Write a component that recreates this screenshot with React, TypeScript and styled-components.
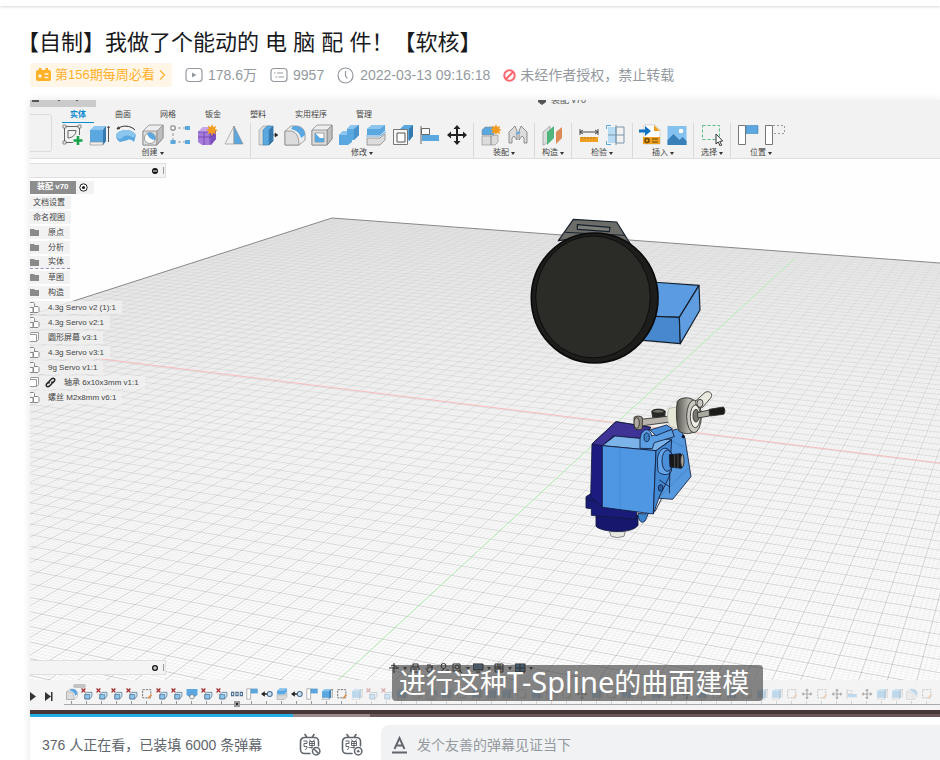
import React from "react";
import styled, { createGlobalStyle, css } from "styled-components";

const CJK = `"Liberation Sans", "Noto Sans CJK SC", sans-serif`;

const Global = createGlobalStyle`
  *, *::before, *::after { box-sizing: border-box; }
  html { scrollbar-width: none; }
  body {
    margin: 0;
    background: #fff;
    font-family: ${CJK};
    color: #18191c;
    overflow-x: hidden;
  }
  button { border: 0; margin: 0; padding: 0; background: none; font: inherit; color: inherit; cursor: pointer; }
  svg { display: block; }
`;

/* ---------- page header ---------- */

const NavEdge = styled.header`
  height: 6px;
  background: #fff;
  box-shadow: 0 1px 3px rgba(0, 0, 0, 0.16);
`;

const Page = styled.main`
  padding: 22px 0 0 30px;
`;

const Title = styled.h1`
  margin: 0 0 0 -13px;
  font-size: 22px;
  line-height: 30px;
  font-weight: 400;
  white-space: nowrap;
  text-spacing-trim: space-all;
`;

const Meta = styled.div`
  display: flex;
  align-items: center;
  margin-top: 5px;
  height: 24px;
  font-size: 14px;
  line-height: 24px;
  color: #9499a0;
  white-space: nowrap;
`;

const WeeklyBadge = styled.a`
  display: flex;
  align-items: center;
  gap: 4px;
  height: 24px;
  width: 142px;
  padding: 0 5px 0 6px;
  border-radius: 2px;
  background: #fff6e8;
  color: #ffb027;
  font-size: 13px;
  text-decoration: none;
`;

const MetaItem = styled.span<{ $gap?: number }>`
  display: flex;
  align-items: center;
  gap: ${(p) => p.$gap ?? 5}px;
  margin-left: 13px;
  text-spacing-trim: space-all;
`;

/* ---------- player ---------- */

const Player = styled.section`
  margin-top: 13px;
  box-shadow: 0 0 8px #e5e6e9;
`;

const Video = styled.div`
  position: relative;
  display: flex;
  flex-direction: column;
  aspect-ratio: 91 / 61;
  overflow: hidden;
  background: #fdfefd;
  font-size: 8px;
  line-height: 12px;
  color: #444;
`;

const Scene = styled.svg`
  position: absolute;
  inset: 0;
  width: 100%;
  height: 100%;
`;

const Ribbon = styled.div`
  position: relative;
  height: 59px;
  flex: none;
  background: #f2f2f2;
  border-bottom: 1px solid #dedede;
  overflow: hidden;
`;

const TitleStrip = styled.div`
  display: flex;
  align-items: flex-end;
  height: 7px;
`;

const StripMenu = styled.div`
  display: flex;
  align-items: flex-start;
  gap: 20px;
  width: 66px;
  height: 7px;
  padding-left: 2px;
  background: #cbcbcb;
`;

const DocName = styled.div`
  display: flex;
  align-items: flex-end;
  gap: 5px;
  margin-left: 442px;
  height: 14px;
  line-height: 14px;
  font-size: 9px;
  color: #555;
`;

const RibbonBody = styled.div`
  display: flex;
`;

const Workspace = styled.div`
  flex: none;
  width: 22px;
  height: 38px;
  margin: 7px 6px 0 0;
  border: 1px solid #dcdcdc;
  border-left: 0;
  border-radius: 0 3px 3px 0;
`;

const Tabs = styled.nav`
  display: flex;
  gap: 13px;
  padding-left: 4px;
  height: 16px;
`;

const Tab = styled.button<{ $active?: boolean }>`
  height: 16px;
  padding: 0 8px;
  font-size: 8px;
  line-height: 14px;
  white-space: nowrap;
  border-bottom: 1px solid transparent;
  ${(p) =>
    p.$active &&
    css`
      color: #0a8bd0;
      font-weight: 700;
      border-bottom-color: #0a8bd0;
    `}
`;

const Groups = styled.div`
  display: flex;
`;

const Group = styled.div`
  display: flex;
  flex-direction: column;
  align-items: center;
  min-width: 37px;
  padding-right: 3px;
  & + & { padding-left: 3px; border-left: 1px solid #dadada; }
`;

const Tools = styled.div`
  display: flex;
`;

const Tool = styled.button`
  display: flex;
  justify-content: center;
  width: 27px;
  height: 24px;
  padding-top: 1px;
`;

const GroupLabel = styled.button`
  display: flex;
  align-items: center;
  gap: 2px;
  height: 12px;
  font-size: 8px;
  line-height: 12px;
`;

const Caret = styled.i`
  border: 2px solid transparent;
  border-top: 3px solid #333;
  border-bottom: 0;
`;

const PanelBar = styled.div<{ $bottom?: boolean }>`
  position: relative;
  flex: none;
  display: flex;
  align-items: center;
  justify-content: flex-end;
  gap: 4px;
  width: 136px;
  height: 15px;
  margin-top: ${(p) => (p.$bottom ? "auto" : "4px")};
  padding-right: 1px;
  background: #f4f4f4;
  border: 1px solid #dfdfdf;
  border-left: 0;
`;

const Grip = styled.i`
  width: 2px;
  height: 7px;
  border-right: 1px solid #999;
`;

const Tree = styled.ul`
  position: relative;
  margin: 3px 0 0;
  padding: 0;
  list-style: none;
`;

const TreeRow = styled.li<{ $dotted?: boolean }>`
  display: flex;
  align-items: center;
  width: max-content;
  height: 13px;
  margin-bottom: 2px;
  padding-right: 6px;
  background: rgba(240, 240, 240, 0.85);
  white-space: pre;
  ${(p) => p.$dotted && css`border-bottom: 1px dashed #8f93bd;`}
`;

const TreeIcon = styled.span`
  width: 10px;
  margin-right: 8px;
`;

const LinkIcon = styled.span`
  width: 10px;
  margin: 0 9px 0 -3px;
`;

const PlainLabel = styled.span`
  padding-left: 3px;
`;

const RootLabel = styled.strong`
  align-self: stretch;
  padding: 0 7px;
  margin-right: 3px;
  background: #8d8d8d;
  color: #fff;
`;

const ViewTools = styled.div`
  position: absolute;
  left: 359px;
  bottom: 36px;
  display: flex;
  align-items: center;
  gap: 3px;
`;

const Timeline = styled.div`
  position: relative;
  display: flex;
  flex: none;
  height: 30px;
  margin-top: 5px;
  background: rgba(243, 243, 243, 0.94);
`;

const Transport = styled.div`
  flex: none;
  display: flex;
  gap: 7px;
  width: 34px;
  padding-top: 12px;
`;

const Track = styled.div`
  flex: 1;
  display: flex;
  height: 25px;
  min-width: 0;
  overflow: hidden;
  border-bottom: 1px solid #a9a9a9;
`;

const Feature = styled.button<{ $faded?: boolean }>`
  flex: none;
  display: flex;
  flex-direction: column;
  align-items: center;
  justify-content: space-between;
  width: 15px;
  padding-top: 8px;
  opacity: ${(p) => (p.$faded ? 0.35 : 1)};
  &::after { content: ""; width: 1px; height: 3px; background: #999; }
`;

const FolderPill = styled.i`
  position: absolute;
  left: 43px;
  top: 4px;
  width: 13px;
  height: 4px;
  border-radius: 2px;
  background: #c3c3c3;
`;

const Marker = styled.i`
  position: absolute;
  left: 204px;
  top: 21px;
  width: 6px;
  height: 6px;
  border: 2px solid #999;
  background: #222;
`;

const Subtitle = styled.p`
  position: absolute;
  left: 50%;
  bottom: 9px;
  margin: 0 0 0 -93px;
  padding: 0 14px 0 7px;
  border-radius: 4px;
  background: rgba(62, 62, 62, 0.62);
  color: #fff;
  font: 400 27px/36px "Noto Sans", "Noto Sans CJK SC", sans-serif;
  white-space: nowrap;
`;

const SubtitleLatin = styled.span`
  font-size: 29px;
  line-height: 1;
`;

const ProgressBand = styled.div`
  padding-top: 4px;
  background: #483739;
`;

const Progress = styled.input`
  appearance: none;
  display: block;
  width: 100%;
  height: 3px;
  margin: 0;
  background: linear-gradient(90deg, #23ade5 0 28.9%, #9b8889 28.9% 37.4%, #6b5557 37.4%);
  &::-webkit-slider-thumb { appearance: none; width: 0; height: 0; }
`;

const SendBar = styled.form`
  display: flex;
  align-items: center;
  padding: 8px 0 8px 12px;
  background: #fff;
  font-size: 14px;
  line-height: 20px;
  color: #61666d;
  white-space: nowrap;
`;

const Watching = styled.span`
  width: 256px;
  text-spacing-trim: space-all;
`;

const DanmakuButton = styled.button`
  width: 24px;
  height: 24px;
  margin-right: 18px;
`;

const DanmakuField = styled.label`
  flex: 1;
  display: flex;
  align-items: center;
  gap: 9px;
  height: 40px;
  margin-left: -1px;
  padding-left: 10px;
  border-radius: 8px 0 0 8px;
  background: #f1f2f3;
`;

const DanmakuInput = styled.input`
  flex: 1;
  min-width: 0;
  border: 0;
  padding: 0;
  outline: 0;
  background: transparent;
  font: 14px/20px ${CJK};
  color: #18191c;
  &::placeholder { color: #9499a0; opacity: 1; }
`;

/* ---------- ribbon icons ---------- */

const B = "#5ba7e0";
const BL = "#8cc5ee";
const BD = "#3679ad";
const G = "#8b8b8b";
const L = "#dcdcdc";

const glyphs: Record<string, React.ReactNode> = {
  sketch: (
    <g fill="none" stroke="#666" strokeWidth="1">
      <path d="M3.500 2v17M2 2.500h18M18.500 2v9M2 18.500h10" />
      <path d="M2 1h3v3H2zM17 1h3v3h-3zM2 17h3v3H2z" fill="#eee" strokeWidth=".7" />
      <path d="M7 14V6.500h8c0 4-3 7-8 7.500z" />
      <path d="M17 12v9M12.500 16.500h9" stroke="#16a34a" strokeWidth="2.600" />
    </g>
  ),
  extrude: (
    <g>
      <path d="M2 6l4-4h12v15l-3 4H2z" fill={BL} />
      <path d="M2 6h13v12H2z" fill={B} />
      <path d="M15 6l3-4v15l-3 4z" fill={BD} />
      <path d="M2 18h13v3H2z" fill="#eee" stroke={G} strokeWidth=".6" />
      <path d="M20.500 2v16M19.500 4l1-2 1 2" stroke="#555" fill="none" />
    </g>
  ),
  revolve: (
    <g>
      <path d="M1 11c3-6 16-7 20 0l-2 7c-2-2-4-3-6-2l-8 2c-3-2-4-4-4-7z" fill={B} />
      <path d="M1 11c3-6 16-7 20 0-2 3-4 3-6 1-3-1-6-1-9 3-3 0-5-2-5-4z" fill={BL} />
      <path d="M2 5c5-4 13-4 18 1M2 5l3-.500M2 5l1.500-2.500" fill="none" stroke="#333" />
    </g>
  ),
  hole: (
    <g stroke={G} strokeWidth=".8">
      <path d="M1 7l6-6h14v13l-6 7H1z" fill="#eee" />
      <path d="M1 7h14v14H1z" fill={L} />
      <path d="M15 7l6-6v13l-6 7z" fill="#bdbdbd" />
      <circle cx="8" cy="14" r="5.500" fill="#fff" />
      <path d="M5 9.500a5.500 5.500 0 0 1 8 6.500c-4 0-7-3-8-6.500z" fill={B} stroke="none" />
    </g>
  ),
  pattern: (
    <g>
      <path d="M4 4h14M4 4v14M4 18h14" stroke="#999" strokeDasharray="3 2" />
      <path d="M2 2h4v4H2z" fill="#fff" stroke="#777" />
      <path d="M16 2h5v4h-5zM1.500 16h5v4h-5zM16 16h5v4h-5z" fill={B} />
    </g>
  ),
  form: (
    <g>
      <path d="M2 8l5-5h10l3 4v8l-5 6H6l-4-3z" fill="#a57bdb" />
      <path d="M2 8l5-5h10l-3 5z" fill="#c7a6ed" />
      <path d="M14 8l6-2v9l-5 6z" fill="#7c4fc0" />
      <path d="M2 13h13l5-3M8 8v13M2 8h12v12" stroke="#6d43ad" fill="none" strokeWidth=".8" />
      <path d="M16 0l1.200 3 3-1-1.200 3 3 1.200-3 1.200 1 3-3-1.500L16 12l-1.500-3-3 1 1.300-3-3-1 3-1.200-1-3 3 1.200z" fill="#f39c1f" />
    </g>
  ),
  rib: (
    <g stroke={G} strokeWidth=".6">
      <path d="M11 2v18H2z" fill="#eee" />
      <path d="M11 2l9 18h-9z" fill={B} />
    </g>
  ),
  press: (
    <g stroke={BD} strokeWidth=".5">
      <path d="M2 6l4-4h8v14l-4 5H2z" fill={L} stroke={G} />
      <path d="M6 6l4-4h6v15l-4 4H6z" fill={B} />
      <path d="M12 6l4-4v15l-4 4z" fill={BD} />
      <path d="M16 11h4M18 9l3 2-3 2z" stroke="#222" fill="#222" />
    </g>
  ),
  fillet: (
    <g stroke={G} strokeWidth=".8">
      <path d="M1 21V7l6-5h5c6 0 9 4 9 9v5l-6 5z" fill="#eee" />
      <path d="M1 21V7l6 0c5 1 8 5 8 14z" fill={L} />
      <path d="M9 2h4c5 1 8 4 8 9l-4 3c-1-5-5-8-10-9z" fill={B} stroke="none" />
    </g>
  ),
  shell: (
    <g stroke={G} strokeWidth=".8">
      <path d="M1 6l5-5h15v14l-5 6H1z" fill="#eee" />
      <path d="M16 6l5-5v14l-5 6z" fill="#bdbdbd" />
      <path d="M1 6h15v15H1z" fill={L} />
      <path d="M4 9h9v9H4z" fill="#fff" />
      <path d="M4 9l5 5v0h4v4H4z" fill={B} stroke="none" />
    </g>
  ),
  combine: (
    <g>
      <path d="M1 11l4-4h4V5l4-4h8v10l-5 5h-2v2l-4 3H1z" fill={B} />
      <path d="M9 5l4-4h8l-5 4zM1 11l4-4h4v4z" fill={BL} />
      <path d="M16 5l5-4v10l-5 5z" fill="#4a92cc" />
    </g>
  ),
  split: (
    <g>
      <path d="M2 5l5-4h13v6l-5 4H2z" fill={B} />
      <path d="M2 5l5-4h13l-5 4z" fill={BL} />
      <path d="M1 12h14l6-4" stroke={B} fill="none" />
      <path d="M2 14h13l5-4v6l-5 5H2z" fill={L} stroke={G} strokeWidth=".8" />
    </g>
  ),
  offset: (
    <g>
      <path d="M8 5l4-4h9v11l-4 5z" fill={B} />
      <path d="M17 5l4-4v11l-4 5z" fill={BD} />
      <path d="M1.500 5.500h14v15h-14z" fill="#f7f7f7" stroke="#777" />
      <path d="M5 9h8v9H5z" fill="#fff" stroke="#555" />
    </g>
  ),
  align: (
    <g>
      <path d="M2 2v18" stroke="#666" />
      <path d="M2.500 4.500h8v6h-8z" fill="#fff" stroke="#666" />
      <path d="M3 11h17v6H3z" fill={B} />
    </g>
  ),
  move: (
    <path
      d="M11 1l3.500 4H12v5h5V7.500l4 3.500-4 3.500V12h-5v5h2.500L11 21l-3.500-4H10v-5H5v2.500L1 11l4-3.500V10h5V5H7.500z"
      fill="#222"
    />
  ),
  component: (
    <g stroke={G} strokeWidth=".6">
      <path d="M2 6l3-3h9v8H2z" fill={B} />
      <path d="M2 12h9v9H2zM11 12l7-1v7l-3 3h-4z" fill={L} />
      <path d="M16 0l1.200 3 3-1-1 3 2.500 1-2.500 1.200 1 3-3-1.500L16 11l-1.500-2.500-3 1 1.300-3-2.300-1 2.300-1.200-1-2.500 3 1z" fill="#f39c1f" stroke="none" />
    </g>
  ),
  joint: (
    <g fill={L} stroke="#777" strokeWidth=".8">
      <path d="M2 19V8l6-6 2 5v9l-3-4-2 2v5z" />
      <path d="M20 19V8l-6-6-2 5v9l3-4 2 2v5z" />
      <path d="M9 10l4-2" stroke={B} strokeWidth="1.600" />
    </g>
  ),
  plane: (
    <g>
      <path d="M1 8l7-6v14l-6 5H1z" fill="#ddd" stroke={G} strokeWidth=".6" />
      <path d="M5 8l7-6v12l-7 7z" fill="#4fb57c" />
      <path d="M14 8l6-5v11l-6 6z" fill="#dd8a56" />
    </g>
  ),
  measure: (
    <g>
      <path d="M2 5v6M20 5v6M2 8h18M5 6L2 8l3 2M17 6l3 2-3 2" stroke="#333" fill="none" strokeWidth=".9" />
      <path d="M2 13h18v5H2z" fill="#f0a020" />
      <path d="M4 13v2M7 13v2M10 13v2M13 13v2M16 13v2" stroke="#b87b14" />
    </g>
  ),
  section: (
    <g>
      <path d="M3 3h8v16H3z" fill="#b9dcf5" />
      <path d="M11 3h8v16h-8zM3 11h16M11 1v20" stroke="#7c95a8" fill="none" />
      <path d="M1.500 5V1.500H6M1.500 17v3.500H6" stroke={B} fill="none" />
    </g>
  ),
  insert: (
    <g>
      <path d="M5 1h11l5 5v14H5z" fill="#fff" stroke="#bbb" strokeWidth=".6" />
      <path d="M15 1l6 6h-6z" fill="#f0a020" />
      <path d="M4 13h17v7H4z" fill="#f0a020" />
      <circle cx="8" cy="16.500" r="2" fill="none" stroke="#6b4808" strokeWidth="1.500" />
      <path d="M13 15h6M13 18h6" stroke="#6b4808" />
      <path d="M0 5.500h6V2l6 5-6 5V8.500H0z" fill="#1273c4" />
    </g>
  ),
  canvas: (
    <g>
      <path d="M1.500 2h19v19h-19z" fill="#84c1ef" />
      <circle cx="15" cy="7" r="2.300" fill="#fff" />
      <path d="M1.500 16l6-6 6 6 3-3 4 4v4h-19z" fill="#3780b8" />
    </g>
  ),
  select: (
    <g>
      <path d="M1.500 1.500h17v14h-17z" fill="none" stroke="#57bd85" strokeDasharray="3 2" />
      <path d="M15 10v10l2.200-2 2 4 1.500-.8-2-3.800 3-.4z" fill="#fff" stroke="#333" />
    </g>
  ),
  pos1: (
    <g>
      <path d="M1.500 1.500h7v19h-7z" fill="#fff" stroke="#777" />
      <path d="M9 1.500h12v8H9z" fill={B} stroke={BD} strokeWidth=".5" />
    </g>
  ),
  pos2: (
    <g fill="none" stroke="#777">
      <path d="M1.500 1.500h7v19h-7z" fill="#fff" />
      <path d="M9 1.500h11.500v8H9" strokeDasharray="2 2" stroke="#999" />
    </g>
  ),
  xcube: (
    <g>
      <path d="M1 1l7 7M8 1L1 8" stroke="#a52a2a" strokeWidth="2.400" />
      <path d="M7 12l4-4h9v7l-4 5H7z" fill="#d8ecfa" stroke="#5b7d99" strokeWidth="1.500" />
      <path d="M7 12h9v8H7z" fill={BL} stroke="#5b7d99" strokeWidth="1.500" />
    </g>
  ),
  tsketch: (
    <g fill="none" stroke="#666" strokeWidth="1.600">
      <path d="M3 3h15v15H3z" strokeDasharray="4 2" />
      <path d="M13 19l6-7" stroke="#e58a3a" strokeWidth="2.600" />
    </g>
  ),
  bucket: (
    <g>
      <path d="M1 2h20v11l-6 4H7l-6-4z" fill={B} />
      <circle cx="11" cy="16" r="4" fill="#fff" stroke="#777" strokeWidth="1.500" />
    </g>
  ),
  dots: (
    <g fill="#fff" stroke="#4a6f92" strokeWidth="2">
      <path d="M1 8h4v6H1zM9 8h4v6H9zM17 8h4v6h-4z" />
    </g>
  ),
  link: (
    <g>
      <path d="M0 11l7-5v3.500h4v3H7V16z" fill="#222" />
      <circle cx="16" cy="11" r="4.500" fill="#cfe3f2" stroke="#4a6f92" strokeWidth="2" />
    </g>
  ),
};

const Glyph = ({ name, size = 22 }: { name: string; size?: number }) => (
  <svg width={size} height={size} viewBox="0 0 22 22" aria-hidden="true">
    {glyphs[name]}
  </svg>
);

const ribbonGroups: { label: string; tools: string[] }[] = [
  { label: "创建", tools: ["sketch", "extrude", "revolve", "hole", "pattern", "form", "rib"] },
  { label: "修改", tools: ["press", "fillet", "shell", "combine", "split", "offset", "align", "move"] },
  { label: "装配", tools: ["component", "joint"] },
  { label: "构造", tools: ["plane"] },
  { label: "检验", tools: ["measure", "section"] },
  { label: "插入", tools: ["insert", "canvas"] },
  { label: "选择", tools: ["select"] },
  { label: "位置", tools: ["pos1", "pos2"] },
];

const tabs = ["实体", "曲面", "网格", "钣金", "塑料", "实用程序", "管理"];

const features = [
  "fillet", "xcube", "xcube", "xcube", "xcube", "tsketch", "xcube", "xcube", "bucket", "xcube",
  "xcube", "dots", "pos1", "link", "split", "link", "pos1", "extrude", "tsketch", "extrude",
  "xcube", "xcube", "extrude", "tsketch", "fillet", "extrude", "tsketch", "extrude", "extrude", "extrude",
  "tsketch", "extrude", "fillet", "tsketch", "move", "extrude", "tsketch", "extrude", "tsketch", "extrude",
  "tsketch", "move", "extrude", "tsketch", "extrude", "tsketch", "extrude", "extrude", "tsketch", "move",
  "tsketch", "move", "align", "move", "extrude", "extrude", "fillet", "tsketch",
];
const FIRST_ROLLED_BACK = 19;

/* ---------- tree ---------- */

const FolderIcon = () => (
  <svg width="10" height="9" viewBox="0 0 10 9"><path d="M0 1h4l1 1h4v6H0z" fill="#8a8a8a" /></svg>
);
const PartIcon = () => (
  <svg width="10" height="11" viewBox="0 0 10 11" fill="#fff" stroke="#888">
    <path d="M0 .5h3.500l1 1V5M0 5.500h3v5H0M3.500 5.500l1-1H8l1 1v4l-1 1H3.500z" />
  </svg>
);
const BodyIcon = () => (
  <svg width="10" height="11" viewBox="0 0 10 11" fill="#fff" stroke="#999">
    <path d="M0 2.500h6.500v7H0M0 2l1-1.500h7.500v7l-2 2" />
  </svg>
);
const ChainIcon = () => (
  <svg width="11" height="11" viewBox="0 0 11 11" fill="none" stroke="#222" strokeWidth="1.500">
    <path d="M4.500 6.500c-1-1-.500-2 .2-2.700l2-2c2-1.500 4 .5 2.500 2.400L7.500 6M6.500 4.500c1 1 .5 2-.2 2.700l-2 2c-2 1.500-4-.5-2.500-2.400L3.500 5" />
  </svg>
);

type NodeKind = "plain" | "folder" | "part" | "body" | "linked";
const nodes: { kind: NodeKind; text: string; dotted?: boolean }[] = [
  { kind: "plain", text: "文档设置" },
  { kind: "plain", text: "命名视图" },
  { kind: "folder", text: "原点" },
  { kind: "folder", text: "分析" },
  { kind: "folder", text: "实体", dotted: true },
  { kind: "folder", text: "草图" },
  { kind: "folder", text: "构造" },
  { kind: "part", text: "4.3g Servo v2 (1):1" },
  { kind: "part", text: "4.3g Servo v2:1" },
  { kind: "body", text: "圆形屏幕 v3:1" },
  { kind: "part", text: "4.3g Servo v3:1" },
  { kind: "part", text: "9g Servo v1:1" },
  { kind: "linked", text: "轴承 6x10x3mm v1:1" },
  { kind: "part", text: "螺丝 M2x8mm v6:1" },
];

/* ---------- 3D viewport ---------- */

// Both families of floor lines meet the horizon at their own vanishing point
// and are evenly spaced along any horizontal line of the view.
const BASE_Y = 660;
const fan = (vx: number, vy: number, start: number, step: number, count: number, skipMajor: boolean) => {
  let d = "";
  for (let i = 0; i < count; i++) {
    if (skipMajor && i % 5 === 0) continue;
    const x = start + step * i;
    const t = 1.4;
    d += `M${vx} ${vy}L${Math.round(vx + (x - vx) * t)} ${Math.round(vy + (BASE_Y - vy) * t)}`;
  }
  return d;
};

const major = fan(1108, -31, -1045, 28.1, 80, false) + fan(-3086, -34, 6305, -75.5, 90, false);
const minor = fan(1108, -31, -1045, 5.62, 400, true) + fan(-3086, -34, 6305, -15.1, 450, true);

const Viewport = () => (
  <Scene viewBox="30 100 910 610" preserveAspectRatio="xMidYMid slice" aria-label="三维模型">
    <defs>
      <linearGradient id="floor" x1="0" y1="0" x2="0" y2="1">
        <stop offset="0" stopColor="#ececec" />
        <stop offset="0.4" stopColor="#f8f8f8" />
        <stop offset="1" stopColor="#fefefe" />
      </linearGradient>
      <linearGradient id="majorLine" gradientUnits="userSpaceOnUse" x1="0" y1="218" x2="0" y2="710">
        <stop offset="0" stopColor="#777" stopOpacity=".1" />
        <stop offset="0.35" stopColor="#777" stopOpacity=".22" />
        <stop offset="1" stopColor="#777" stopOpacity=".42" />
      </linearGradient>
      <linearGradient id="minorLine" gradientUnits="userSpaceOnUse" x1="0" y1="218" x2="0" y2="710">
        <stop offset="0" stopColor="#777" stopOpacity=".04" />
        <stop offset="0.4" stopColor="#777" stopOpacity=".08" />
        <stop offset="1" stopColor="#777" stopOpacity=".14" />
      </linearGradient>
      <clipPath id="plane"><path d="M332 218L940 263V710H30V315z" /></clipPath>
      <linearGradient id="metal" x1="0" y1="0" x2="1" y2="0">
        <stop offset="0" stopColor="#55554f" />
        <stop offset="0.5" stopColor="#b5b5ac" />
        <stop offset="1" stopColor="#6b6b64" />
      </linearGradient>
    </defs>
    <path d="M332 218L940 263V710H30V315z" fill="url(#floor)" />
    <g clipPath="url(#plane)" fill="none">
      <path d={minor} stroke="url(#minorLine)" strokeWidth=".6" />
      <path d={major} stroke="url(#majorLine)" strokeWidth=".8" />
      <path d="M30 350L940 463" stroke="#f8bcbc" strokeWidth="1" />
      <path d="M795 258L306 710" stroke="#b4f2b4" strokeWidth="1" />
    </g>
    <path d="M30 315L332 218L940 263" fill="none" stroke="#888" strokeWidth="1" />

    <g transform="translate(510 200) scale(.3333)" stroke="#15202c" strokeWidth="3.500" strokeLinejoin="round">
      <path d="M425 246L567 256 508 352 425 348z" fill="#5a9be2" />
      <path d="M400 348L508 352 511 431 400 421z" fill="#4788cf" />
      <path d="M567 256L570 330 511 431 508 352z" fill="#5f9ce0" />
      <path d="M145 122L190 58 320 66 366 140 250 110z" fill="#6c6c69" />
      <path d="M166 97L345 106" fill="none" strokeWidth="3" />
      <path d="M202 74L300 82 298 95 202 88z" fill="#7d7d79" />
      <ellipse cx="254" cy="294" rx="190" ry="195" fill="#1d1d1b" stroke="#0a0a0a" strokeWidth="5" />
      <ellipse cx="249" cy="291" rx="172" ry="183" fill="#2b2b28" stroke="#0c0c0b" strokeWidth="3" />
    </g>

    <g transform="translate(570 380) scale(.3333)" stroke="#101a3c" strokeWidth="2.500" strokeLinejoin="round">
      <path d="M118 455h48l-4 14-20 4-18-4z" fill="#e8e8e0" stroke="#777" />
      <path d="M78 400v38c8 18 110 26 126-2v-30z" fill="#17176e" />
      <path d="M48 350l16-10 140 30-6 48-134-12v-20l-16-2z" fill="#1a1a78" />
      <path d="M48 358l50 10" />
      <path d="M66 192L138 125 242 142 228 170 104 200 100 385 62 350z" fill="#1d1b80" />
      <path d="M66 192L138 125 242 142 216 176 130 168 97 197z" fill="#3f3496" />
      <path d="M204 400c0 30 20 36 26 12l18-40-22 30z" fill="#3d84cc" />
      <path d="M310 150l20-5 15 30 18 115-55 68-40-3-14-100z" fill="#5598dd" />
      <path d="M300 180l40 20M270 350l90-90" fill="none" stroke="#3f7fc2" />
      <path d="M97 197L135 168 220 176 305 178 258 212z" fill="#7cb4ea" />
      <path d="M97 197L258 212 250 402 97 382z" fill="#4f97e2" />
      <path d="M150 203v184" stroke="#4687cc" />
      <path d="M258 212L305 180 298 290 268 350 250 402z" fill="#4389d4" />
      <path d="M210 205v-25c2-38 32-40 35-12l60-20 8 22-60 18-6 18z" fill="#5b9fe2" />
      <ellipse cx="230" cy="172" rx="8" ry="13" fill="#3f7fc2" />
      <path d="M240 150l50-15 18 12-50 20z" fill="#4a8fd8" />
      <path d="M262 240c4-46 40-46 46-6l-4 40c-8 14-30 12-40 0z" fill="#63a5e8" />
      <ellipse cx="292" cy="242" rx="16" ry="32" fill="#4b8fd9" />
      <path d="M298 224l34-3c10 4 10 40 2 44l-34-4z" fill="#171717" />
      <path d="M314 223v40M324 223v41" stroke="#555" />
      <ellipse cx="337" cy="242" rx="5" ry="19" fill="#a8a8a0" stroke="#222" />
      <path d="M275 355l-20 40M300 270l-2 70M268 300l30 20" fill="none" />
      <ellipse cx="272" cy="324" rx="7" ry="10" fill="#2d62a5" />
      <g stroke="#2b2b28">
        <path d="M245 94c5-9 36-9 41 0l-2 20-36-2z" fill="#282826" />
        <ellipse cx="265" cy="94" rx="17" ry="5" fill="#77776f" />
        <path d="M212 118L300 108v18L214 138z" fill="#b9b4ac" />
        <path d="M192 112c8-6 20-4 25 0v34c-8 5-18 4-24-2z" fill="#969087" />
        <ellipse cx="200" cy="129" rx="8" ry="16" fill="#b1aba1" />
        <path d="M297 85l30-5v68l-28-10c-8-16-8-38-2-53z" fill="#e7e7d8" stroke="#b5b5a4" />
        <path d="M322 64c8-12 38-14 48-4 34 12 28 92-4 98-14 6-32 2-40-6-8-24-8-64-4-88z" fill="url(#metal)" />
        <ellipse cx="372" cy="109" rx="22" ry="49" fill="#c8c8bf" />
        <ellipse cx="376" cy="109" rx="15" ry="34" fill="#efefe8" />
        <ellipse cx="378" cy="107" rx="9" ry="19" fill="#77776f" />
        <path d="M378 62l24-22c12-12 30 0 20 14l-24 28c-12 6-24-6-20-20z" fill="#e9e9e0" />
        <ellipse cx="390" cy="70" rx="9" ry="12" fill="#c9c9bf" />
        <path d="M382 98l36-8v18l-34 6z" fill="#aaa9a2" />
        <path d="M418 88l42-7c6 4 6 18 1 22l-41 5z" fill="#1b1b1a" />
      </g>
      <circle cx="340" cy="170" r="4" fill="#111" />
    </g>
  </Scene>
);

/* ---------- small icons ---------- */

const TvIcon = () => (
  <svg width="15" height="14" viewBox="0 0 15 14" fill="#ffb027">
    <path d="M3 0h2.500v2h4V0H12v2h1a2 2 0 0 1 2 2v7a2 2 0 0 1-2 2H2a2 2 0 0 1-2-2V4a2 2 0 0 1 2-2h1z" />
    <circle cx="4" cy="8" r="1.700" fill="#fff6e8" />
    <path d="M8.500 6h4M8.500 9.500h4" stroke="#fff6e8" strokeWidth="1.400" />
  </svg>
);
const Chevron = () => (
  <svg width="7" height="12" viewBox="0 0 7 12" fill="none" stroke="#ffb027" strokeWidth="1.200">
    <path d="M1 1.500L5.500 6 1 10.500" />
  </svg>
);
const PlayIcon = () => (
  <svg width="18" height="16" viewBox="0 0 18 16" fill="none" stroke="#9499a0" strokeWidth="1.200">
    <rect x="1" y="1.500" width="16" height="13" rx="3" />
    <path d="M7 5.500v5L11.500 8z" fill="#9499a0" stroke="none" />
  </svg>
);
const ListIcon = () => (
  <svg width="18" height="16" viewBox="0 0 18 16" fill="none" stroke="#9499a0" strokeWidth="1.200">
    <rect x="1" y="1.500" width="16" height="13" rx="3" />
    <path d="M4 6h1.500M7 6h6M5.500 10H7M8.500 10h5.500" />
  </svg>
);
const ClockIcon = () => (
  <svg width="17" height="17" viewBox="0 0 17 17" fill="none" stroke="#9499a0" strokeWidth="1.200">
    <circle cx="8.500" cy="8.500" r="7.500" />
    <path d="M8.500 4v5l2 2.500" />
  </svg>
);
const BanIcon = () => (
  <svg width="13" height="13" viewBox="0 0 13 13" fill="none" stroke="#fd676f" strokeWidth="2">
    <circle cx="6.500" cy="6.500" r="5.200" />
    <path d="M3 10l7-7" />
  </svg>
);

const DanmakuTv = ({ off }: { off?: boolean }) => (
  <svg width="24" height="24" viewBox="0 0 24 24" fill="none" stroke="#61666d" strokeWidth="1.600">
    <path d="M12 20.500H6.500A4 4 0 0 1 2.500 16.500V8.500a4 4 0 0 1 4-4h10a4 4 0 0 1 4 4V13M7 1.500l2 3M16 1.500l-2 3" strokeLinecap="round" />
    <path d="M5.500 8h3.500v2.500H6v3h3c0 2-.5 3-2 3M11.500 6.500l1 1.500M16.500 6.500l-1 1.500M11.500 8.500h5v4h-5zM14 8.500v8M10.500 14.500h5M11.500 10.500h5" strokeWidth="1" />
    <circle cx="18.200" cy="18.200" r="5" fill="#fff" stroke="none" />
    <circle cx="18.200" cy="18.200" r="3.700" strokeWidth="1.500" />
    {off ? <path d="M15.800 15.800l4.800 4.800" strokeWidth="1.500" /> : <circle cx="18.200" cy="18.200" r="1.300" fill="#61666d" stroke="none" />}
  </svg>
);
const LetterIcon = () => (
  <svg width="17" height="18" viewBox="0 0 17 18" fill="none" stroke="#61666d" strokeWidth="1.900">
    <path d="M3.500 13L8.500 2l5 11M5.300 9.500h6.400M1 16.500h15" />
  </svg>
);

const Knob = ({ plus }: { plus?: boolean }) => (
  <svg width="6" height="6" viewBox="0 0 6 6">
    <circle cx="3" cy="3" r="3" fill="#111" />
    <path d={plus ? "M1 3h4M3 1v4" : "M1 3h4"} stroke="#fff" />
  </svg>
);

const viewIcons: { d: string; caret?: boolean; fill?: string }[] = [
  { d: "M5 0v10M0 5h10M2 3c3-2 6 0 6 3", caret: true },
  { d: "M1 4h8v5H1zM3 4V1h5v3M3 6h4" },
  { d: "M2 5l2 4h4V3M4 6V1M6 5V1M8 5V2" },
  { d: "M6 6L1 10M3 3a2.500 2.500 0 1 0 5 0a2.500 2.500 0 1 0-5 0M8 7h3" },
  { d: "M1 1h7v7H1zM3 4a2 2 0 1 0 4 0a2 2 0 1 0-4 0M7 7l3 3", caret: true },
  { d: "M0 1h10v6H0zM3 9h4", caret: true, fill: "#6484a4" },
  { d: "M1 1h8v8H1zM1 4h8M1 6h8M4 1v8M6 1v8", caret: true },
  { d: "M0 1h10v8H0zM5 1v8M0 5h10", caret: true, fill: "#5a86ad" },
];

export default function App() {
  return (
    <>
      <Global />
      <NavEdge />
      <Page>
        <Title>【自制】我做了个能动的 电 脑 配 件！【软核】</Title>
        <Meta>
          <WeeklyBadge href="#weekly"><TvIcon />第156期每周必看<Chevron /></WeeklyBadge>
          <MetaItem><PlayIcon />178.6万</MetaItem>
          <MetaItem><ListIcon />9957</MetaItem>
          <MetaItem $gap={6}><ClockIcon />2022-03-13 09:16:18</MetaItem>
          <MetaItem $gap={4}><BanIcon />未经作者授权，禁止转载</MetaItem>
        </Meta>

        <Player>
          <Video>
            <Viewport />
            <Ribbon>
              <TitleStrip>
                <StripMenu>
                  <svg width="60" height="4" viewBox="0 0 60 4"><path d="M0 0h7v2H0zM26 0h2v1h-2zM44 0h2v1h-2z" fill="#555" /></svg>
                </StripMenu>
                <DocName>
                  <svg width="8" height="14" viewBox="0 0 8 14"><path d="M0 7l4-4 4 4v2l-4 3-4-3z" fill="#555" /></svg>
                  装配 v70
                </DocName>
              </TitleStrip>
              <RibbonBody>
                <Workspace />
                <div>
                  <Tabs>
                    {tabs.map((t, i) => <Tab key={t} $active={i === 0}>{t}</Tab>)}
                  </Tabs>
                  <Groups>
                    {ribbonGroups.map((g) => (
                      <Group key={g.label}>
                        <Tools>
                          {g.tools.map((t) => <Tool key={t} aria-label={t}><Glyph name={t} /></Tool>)}
                        </Tools>
                        <GroupLabel>{g.label}<Caret /></GroupLabel>
                      </Group>
                    ))}
                  </Groups>
                </div>
              </RibbonBody>
            </Ribbon>

            <PanelBar><Knob /><Grip /></PanelBar>
            <Tree>
              <TreeRow>
                <RootLabel>装配 v70</RootLabel>
                <svg width="9" height="9" viewBox="0 0 9 9"><circle cx="4.500" cy="4.500" r="3.700" fill="#fff" stroke="#222" /><circle cx="4.500" cy="4.500" r="1.600" fill="#222" /></svg>
              </TreeRow>
              {nodes.map((n) => (
                <TreeRow key={n.text} $dotted={n.dotted}>
                  {n.kind === "plain" ? (
                    <PlainLabel>{n.text}</PlainLabel>
                  ) : (
                    <>
                      <TreeIcon>
                        {n.kind === "folder" ? <FolderIcon /> : n.kind === "part" ? <PartIcon /> : <BodyIcon />}
                      </TreeIcon>
                      {n.kind === "linked" && <LinkIcon><ChainIcon /></LinkIcon>}
                      {n.text}
                    </>
                  )}
                </TreeRow>
              ))}
            </Tree>

            <PanelBar $bottom><Knob plus /><Grip /></PanelBar>
            <Timeline>
              <Transport>
                <svg width="7" height="9" viewBox="0 0 7 9"><path d="M0 0l6 4.500L0 9z" fill="#333" /></svg>
                <svg width="9" height="9" viewBox="0 0 9 9"><path d="M1 0l6 4.500L1 9zM7 0h1.500v9H7z" fill="#333" /></svg>
              </Transport>
              <FolderPill />
              <Track>
                {features.map((f, i) => (
                  <Feature key={i} $faded={i >= FIRST_ROLLED_BACK} aria-label={f}><Glyph name={f} size={12} /></Feature>
                ))}
              </Track>
              <Marker />
            </Timeline>

            <ViewTools>
              {viewIcons.map((v, i) => (
                <React.Fragment key={i}>
                  <svg width="11" height="11" viewBox="0 0 11 11" fill={v.fill ?? "none"} stroke="#222"><path d={v.d} /></svg>
                  {v.caret && <Caret />}
                </React.Fragment>
              ))}
            </ViewTools>
            <Subtitle>进行这种<SubtitleLatin>T-Spline</SubtitleLatin>的曲面建模</Subtitle>
          </Video>

          <ProgressBand>
            <Progress type="range" min={0} max={1000} defaultValue={289} aria-label="播放进度" />
          </ProgressBand>

          <SendBar>
            <Watching>376 人正在看，已装填 6000 条弹幕</Watching>
            <DanmakuButton type="button" aria-label="关闭弹幕"><DanmakuTv off /></DanmakuButton>
            <DanmakuButton type="button" aria-label="弹幕设置"><DanmakuTv /></DanmakuButton>
            <DanmakuField>
              <LetterIcon />
              <DanmakuInput type="text" placeholder="发个友善的弹幕见证当下" aria-label="弹幕" />
            </DanmakuField>
          </SendBar>
        </Player>
      </Page>
    </>
  );
}
